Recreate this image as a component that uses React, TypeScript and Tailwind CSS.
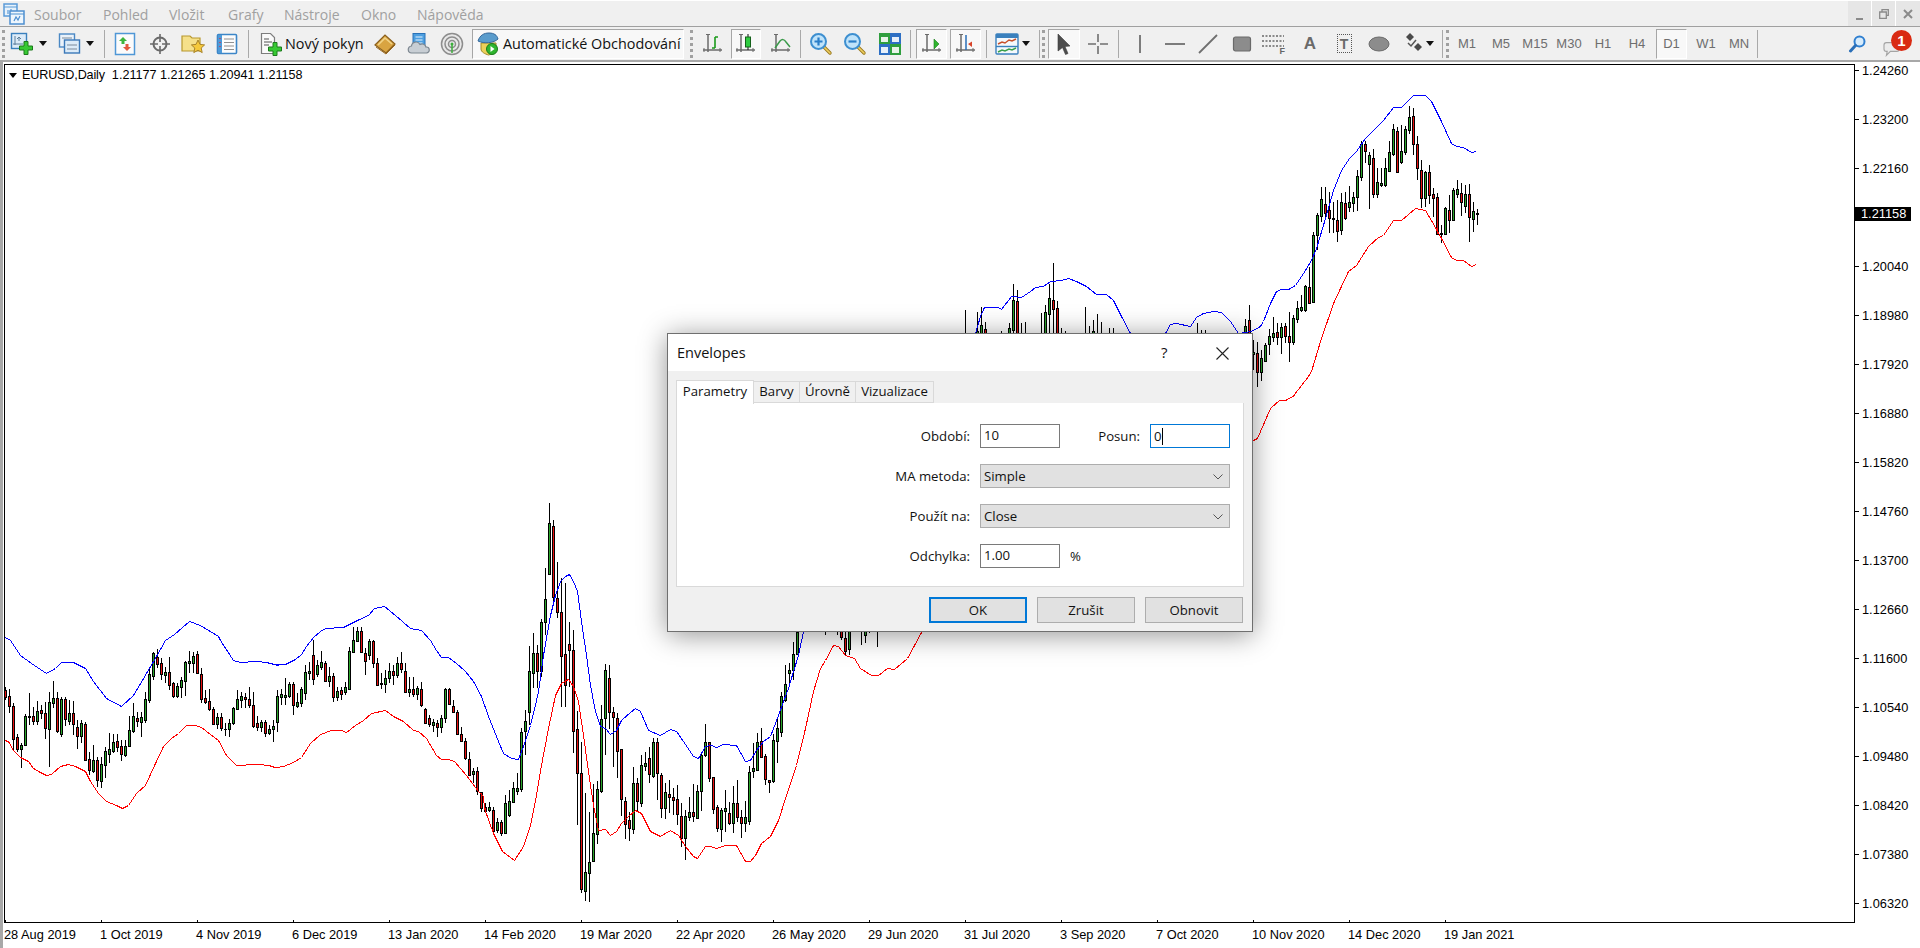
import React from "react";

type Bar = number[];
const bars: { i: number; y: number[]; c: number }[] = [];
const seg = (start: number, base: number, rows: Bar[]) => {
  rows.forEach((r, k) => {
    bars.push({ i: start + k, y: [r[0], r[1], r[2], r[3]].map((v) => Math.round(base + v / 3)), c: r[4] });
  });
};
// wickTop, bodyTop, bodyBottom, wickBottom, colour (1 green, 0 red)
seg(0, 640, [
  [142,150,172,180,0],[148,168,198,220,0],[190,198,296,330,0],[283,292,326,335,0],[308,316,326,383,1],[222,228,314,318,1],[160,228,231,254,1],[200,228,242,255,0],[183,213,242,256,1],[195,210,218,238,0],
  [185,219,264,298,0],[155,186,266,380,1],[124,174,188,205,1],[155,174,272,280,0],[170,176,282,292,1],[172,176,238,258,0],[180,218,242,254,1],[182,219,251,285,0],[240,261,288,327,0],[240,249,288,308,1],
  [245,252,360,360,0],[335,357,390,405,0],[315,360,392,400,1],[350,360,420,440,0],[350,372,422,445,1],[322,333,374,413,1],[280,327,342,370,1],[282,306,333,340,1],[282,303,321,335,0],[300,319,342,362,0],
  [300,319,345,350,1],[228,270,318,320,1],[190,229,272,278,1],[215,234,242,260,0],[215,231,245,290,1],[155,177,240,248,1],[85,102,180,190,1],[35,39,107,120,1],[28,50,72,85,0],[55,69,103,120,0],
  [80,96,104,130,1],[52,96,134,150,0],[125,129,168,175,0],[130,138,168,175,1],[110,121,141,175,1],[62,66,122,168,1],[32,63,68,100,1],[35,48,68,100,1],[34,42,100,100,0],[85,102,177,190,0],
  [150,174,186,192,0],[148,183,208,212,0],[200,207,252,255,0],[220,231,252,268,1],[218,231,265,274,0],[250,267,268,288,0],[238,249,268,292,1],[200,203,250,255,1],[150,178,208,210,1],[155,169,179,205,1],
  [160,171,178,205,0],[142,177,196,205,0],[155,195,257,265,0],[228,249,262,272,0],[240,245,260,275,1],[240,246,280,290,0],[255,267,279,285,1],
]);
seg(67, 630, [
  [270,288,296,335,1],[180,198,275,305,1],[178,192,200,225,1],[144,195,200,225,1],[155,162,198,205,1],[155,162,224,255,0],[190,216,228,235,1],[172,178,220,230,1],[105,126,190,210,1],[95,124,128,150,1],
  [30,76,146,165,0],[90,105,131,140,1],[62,97,110,120,1],[92,99,152,155,0],[110,139,152,170,1],[130,139,202,215,0],[170,184,200,212,1],[170,181,191,210,0],[155,172,185,195,1],[50,64,176,178,1],
  [-10,30,65,70,1],[-10,3,32,36,1],[-10,3,67,70,0],[55,70,92,135,0],[28,34,76,90,1],[30,33,98,115,0],[85,99,164,165,0],[130,159,161,178,1],[120,145,163,190,1],[100,122,143,160,1],
  [105,124,134,165,0],[80,100,134,145,1],[66,100,118,130,0],[100,122,185,190,0],[140,178,185,200,1],[142,178,193,200,0],[168,175,193,210,1],[155,178,226,230,0],[235,236,278,280,0],[256,265,282,290,0],
  [268,277,284,305,1],[270,278,291,320,0],[255,265,290,310,1],[175,176,264,280,1],[175,178,222,225,0],[210,229,247,250,0],[240,247,311,315,0],[290,311,334,335,0],[325,334,385,390,0],[365,388,434,437,0],
  [415,424,433,460,1],[410,424,484,495,0],[485,485,533,545,0],
]);
seg(120, 480, [
  [968,980,992,995,0],[965,980,990,995,1],[982,990,1052,1060,0],[1015,1025,1050,1060,1],[1020,1026,1060,1068,0],[945,970,1060,1062,1],[930,962,1005,1010,1],[905,925,965,968,1],[880,925,932,945,1],[745,755,928,935,1],[690,723,753,825,1],[498,573,696,735,1],
]);
seg(132, 495, [
  [415,475,535,580,1],[450,475,527,580,0],[372,382,527,545,1],[220,313,382,420,1],[25,85,237,240,1],[75,93,307,330,0],[202,310,350,368,0],[248,352,482,636,0],[265,478,571,637,0],[380,448,466,575,0],
  [405,466,707,775,0],[648,703,835,990,0],[740,835,1183,1195,0],[895,1132,1187,1217,1],[950,1100,1135,1220,1],[868,1015,1097,1100,1],[858,883,1016,1047,1],[630,673,888,895,1],[507,526,668,780,1],[510,550,650,702,0],
  [637,652,665,815,0],[655,670,767,850,0],[763,763,913,962,0],[905,918,988,1032,0],[950,975,1000,1037,0],[815,865,1003,1016,1],[850,865,917,950,0],[780,811,923,935,1],[770,805,812,828,1],[757,790,838,865,0],
  [730,740,842,850,1],[730,742,835,915,0],[835,840,938,968,0],[865,892,940,972,1],[855,898,905,955,0],[880,907,914,960,0],[870,913,958,990,0],[925,964,1028,1055,0],[945,962,1030,1095,1],[905,950,965,978,1],
  [868,952,964,980,0],[870,888,968,968,1],[775,780,887,948,1],[688,742,780,785,1],[742,742,848,860,0],[845,847,941,957,0],[930,935,998,1012,0],[940,945,1003,1040,1],[885,940,948,1010,1],[920,955,984,990,0],
  [872,925,985,1015,1],[855,925,965,980,0],[945,967,985,1028,0],[918,967,985,1012,1],[813,832,979,990,1],[745,820,827,850,1],[715,742,824,828,1],[700,738,785,790,0],[778,784,853,870,0],[855,855,860,893,0],
  [718,736,857,865,1],[668,700,738,805,1],[590,604,710,725,1],[510,568,614,622,1],[505,526,535,567,1],[440,478,524,555,1],[385,410,478,480,1],
]);
const hiddenBelow: number[][] = [
  [205,-100,-100,-100,45,1],[208,-100,-100,-100,45,1],[209,-100,-100,52,60,0],[210,-100,55,92,105,0],[211,-100,-100,87,105,1],[214,-100,-100,-100,75,1],[215,-100,-100,45,70,1],[216,-100,-100,-100,38,1],[218,-100,-100,-100,80,1],
];
hiddenBelow.forEach((h) => seg(h[0], 620, [h.slice(1)]));
const hiddenAbove: number[][] = [
  [240,210,400,400,400,1],[243,215,272,400,400,1],[244,200,255,400,400,1],[245,245,268,400,400,0],[249,272,400,400,400,1],[251,250,265,400,400,1],[252,132,180,270,400,1],[253,150,183,400,400,0],[254,250,278,400,400,1],[255,245,400,400,400,1],
  [259,220,400,400,400,1],[260,195,216,400,400,1],[261,132,175,223,400,1],[262,70,181,208,400,0],[263,183,205,400,400,0],[264,265,400,400,400,1],[265,272,400,400,400,1],[270,200,400,400,400,1],[271,258,400,400,400,1],[272,240,273,400,400,1],
  [273,222,400,400,400,1],[274,245,400,400,400,1],[276,265,400,400,400,1],[277,265,400,400,400,1],[298,248,400,400,400,1],[299,270,400,400,400,1],[300,270,400,400,400,1],[310,237,258,400,400,1],[311,195,240,400,400,0],
];
hiddenAbove.forEach((h) => seg(h[0], 240, [h.slice(1)]));
seg(312, 95, [
  [735,772,778,825,1],[740,775,830,875,0],[765,790,832,857,1],[745,750,797,800,1],[702,724,746,780,1],[667,714,725,740,1],[685,710,727,750,0],[685,696,725,777,1],[685,694,722,745,0],[652,724,742,800,0],
  [660,669,742,750,1],[618,640,672,685,1],[600,637,644,650,1],[570,573,644,650,1],[515,577,623,627,0],[412,420,622,622,1],[355,360,420,465,1],[275,313,362,380,1],[275,327,354,370,0],[290,345,368,413,0],
  [320,369,373,415,1],[315,376,407,440,0],[295,322,406,420,1],[292,324,368,375,0],[272,322,335,350,1],[292,307,323,352,1],[225,243,307,348,1],[138,148,245,258,1],[138,147,167,205,0],[170,180,208,342,1],
  [162,190,296,310,0],[220,262,296,310,1],[220,265,271,275,1],[190,219,270,275,1],[138,172,228,232,1],[88,103,178,182,1],[95,108,230,232,0],[90,169,200,208,1],[92,103,172,180,1],[33,66,106,118,1],
  [40,64,147,180,0],[124,148,220,255,0],[195,225,310,340,0],[228,232,310,335,1],[210,232,301,327,0],[280,298,308,365,0],[295,307,416,418,0],[390,414,416,445,0],[335,340,418,420,1],[300,346,374,415,0],
  [280,286,374,375,1],[255,283,296,310,1],[265,295,322,362,0],[270,297,332,355,1],[268,298,365,440,0],[322,348,371,410,1],[342,355,358,390,1],
]);

let blackPath = "";
let greenPath = "";
let redPath = "";
bars.forEach((b) => {
  const x = 5 + 4 * b.i;
  const [wt, bt, bb, wb] = b.y;
  blackPath += `M${x} ${wt}h1V${Math.max(wb, wt + 1)}h-1z`;
  blackPath += `M${x - 1} ${bt}h3V${Math.max(bb + 1, bt + 1)}h-3z`;
  if (bb - bt >= 2) {
    const f = `M${x} ${bt + 1}h1V${bb}h-1z`;
    if (b.c) greenPath += f;
    else redPath += f;
  }
});

type Pt = number[];
const P = (x0: number, sx: number, b: number, pts: Pt[]) =>
  pts.map(([x, y]) => `${Math.floor(x0 + x / sx) + 0.5},${Math.floor(b + y / 3) + 0.5}`).join(" ");

const blueLine = [
  P(0, 3, 640, [[15, -9],[30, 0],[60, 45],[95, 70],[138, 100],[165, 85],[185, 67],[220, 67],[255, 85],[280, 125],[320, 175],[365, 200],[400, 165],[440, 100],[470, 50],[495, 0]]),
  P(0, 2.24, 480, [[390, 463],[425, 424],[450, 435],[490, 470]]),
  P(0, 3, 640, [[660, 0],[700, 60],[720, 67],[770, 65],[800, 67],[835, 75]]),
  P(270, 3, 630, [[20, 104],[45, 102],[75, 88],[95, 72],[110, 50],[130, 22],[150, 5]]),
  P(0, 2.24, 480, [[730, 445],[770, 443],[800, 420],[825, 405],[840, 385],[862, 380],[885, 405],[920, 445]]),
  P(270, 3, 630, [[455, 0],[480, 30],[500, 60],[515, 82],[535, 82],[560, 100],[585, 125],[610, 155],[635, 200],[655, 260],[680, 320],[700, 370],[725, 385],[745, 388],[760, 350]]),
  P(530, 3, 495, [[0, 690],[15, 630],[25, 590],[40, 480],[60, 360],[75, 300],[90, 260],[105, 245],[118, 238],[130, 260],[142, 290],[155, 380],[170, 480],[180, 570],[195, 650],[210, 695],[225, 700],[240, 718],[260, 705],[275, 675],[300, 652],[315, 640],[330, 650],[355, 705],[390, 722],[420, 703],[440, 710],[460, 740],[490, 785],[505, 790],[525, 755],[545, 750],[560, 757],[580, 748],[620, 750],[645, 800],[660, 795],[680, 765],[700, 740],[720, 725],[745, 660],[760, 620],[775, 580],[790, 530],[805, 480],[820, 410]]),
  P(930, 3, 240, [[135, 280],[150, 230],[163, 202],[205, 202],[215, 208],[245, 170],[275, 172],[300, 155],[315, 142],[340, 138],[360, 125],[395, 122],[415, 115],[440, 125],[470, 140],[500, 162],[530, 163],[550, 180],[575, 230],[600, 280],[705, 280],[720, 253],[740, 250],[780, 258],[800, 232],[820, 220],[850, 213],[875, 218],[900, 245],[925, 280],[965, 275],[990, 260]]),
  P(1250, 3, 95, [[40, 680],[60, 625],[80, 588],[95, 582],[115, 584],[135, 570],[160, 535],[185, 495],[200, 460],[225, 370],[250, 285],[275, 225],[298, 190],[320, 170],[345, 130],[375, 100],[400, 75],[430, 36],[455, 36],[490, 2],[500, 0],[525, 2],[545, 20],[575, 80],[605, 145],[620, 155],[640, 157],[665, 172],[680, 170]]),
].join(" ");

const redLine = [
  P(0, 3, 640, [[14, 300],[25, 305],[40, 330],[60, 352],[85, 365],[100, 385],[120, 397],[140, 407],[155, 402],[180, 378],[205, 373],[225, 378],[255, 395],[270, 425],[295, 460],[320, 485],[350, 495],[368, 505],[385, 495],[410, 460],[435, 435],[465, 370],[490, 320],[515, 295],[535, 280],[560, 257],[585, 257],[605, 262],[630, 282],[655, 300],[680, 345],[710, 375],[770, 373],[810, 375]]),
  P(270, 3, 630, [[0, 408],[20, 412],[40, 410],[70, 397],[95, 382],[120, 340],[150, 312],[185, 302],[215, 300],[230, 306],[255, 285],[280, 272],[305, 250],[345, 240],[370, 258],[400, 275],[430, 302],[445, 303],[470, 325],[500, 375],[515, 388],[535, 388],[552, 395],[590, 435],[625, 485],[640, 500]]),
  P(0, 2.24, 480, [[1085, 985],[1105, 1060],[1125, 1115],[1152, 1140],[1172, 1100]]),
  P(530, 3, 495, [[0, 990],[20, 900],[35, 810],[55, 700],[75, 600],[95, 565],[115, 552],[130, 575],[145, 620],[160, 720],[175, 830],[190, 930],[205, 1005],[225, 1003],[240, 1020],[260, 1010],[275, 985],[295, 965],[315, 945],[335, 955],[360, 1010],[390, 1025],[420, 1005],[445, 1020],[465, 1055],[490, 1085],[502, 1090],[525, 1055],[540, 1053],[560, 1060],[585, 1050],[620, 1052],[645, 1098],[660, 1100],[675, 1080],[695, 1045],[720, 1025],[745, 975],[770, 900],[800, 810],[825, 700],[850, 590],[870, 520]]),
  P(700, 2.24, 620, [[280, 120],[300, 75],[310, 78],[325, 105],[345, 115],[360, 145],[385, 165],[400, 165],[420, 146],[435, 148],[465, 115],[480, 75],[497, 38]]),
  P(1240, 2.306, 60, [[30, 1140],[40, 1135],[70, 1045],[90, 1020],[105, 1020],[125, 1005]]),
  P(1250, 3, 95, [[133, 897],[175, 845],[185, 830],[210, 740],[250, 625],[295, 530],[320, 510],[355, 455],[385, 428],[400, 420],[430, 377],[455, 377],[495, 340],[525, 345],[545, 375],[575, 430],[605, 487],[620, 495],[640, 495],[665, 515],[680, 508]]),
].join(" ");

const prices = ["1.24260","1.23200","1.22160","","1.20040","1.18980","1.17920","1.16880","1.15820","1.14760","1.13700","1.12660","1.11600","1.10540","1.09480","1.08420","1.07380","1.06320"];
const dates = ["28 Aug 2019","1 Oct 2019","4 Nov 2019","6 Dec 2019","13 Jan 2020","14 Feb 2020","19 Mar 2020","22 Apr 2020","26 May 2020","29 Jun 2020","31 Jul 2020","3 Sep 2020","7 Oct 2020","10 Nov 2020","14 Dec 2020","19 Jan 2021"];
const menus = [
  { t: "Soubor", c: "w-[69px]" },
  { t: "Pohled", c: "w-[66px]" },
  { t: "Vložit", c: "w-[59px]" },
  { t: "Grafy", c: "w-[56px]" },
  { t: "Nástroje", c: "w-[77px]" },
  { t: "Okno", c: "w-[56px]" },
  { t: "Nápověda", c: "w-[80px]" },
];

const Svg = ({ children, w = 24, h = 24 }: { children: React.ReactNode; w?: number; h?: number }) => (
  <svg width={w} height={h} viewBox={`0 0 ${w} ${h}`} fill="none">{children}</svg>
);
const Cell = ({ c = "", children }: { c?: string; children: React.ReactNode }) => (
  <div className={`w-6 h-6 shrink-0 flex items-center justify-center ${c}`}>{children}</div>
);
const Sep = ({ c = "" }: { c?: string }) => <div className={`w-px h-[28px] shrink-0 bg-[#a9a9a9] ${c}`} />;
const Grip = ({ c = "" }: { c?: string }) => <div className={`w-[3px] h-[28px] shrink-0 border-l-[3px] border-dotted border-[#a0a0a0] ${c}`} />;
const Caret = ({ c = "" }: { c?: string }) => (
  <div className={`w-2 h-6 shrink-0 flex items-center justify-center ${c}`}>
    <svg width="8" height="5" viewBox="0 0 8 5"><path d="M0 0h8L4 5z" fill="#111" /></svg>
  </div>
);
const Toggle = ({ c = "", children }: { c?: string; children: React.ReactNode }) => (
  <div className={`h-[30px] shrink-0 flex items-center justify-center bg-[#f8f8f8] border border-t-[#a6a6a6] border-l-[#a6a6a6] border-r-white border-b-white ${c}`}>{children}</div>
);
const Axes = () => (
  <>
    <path d="M7 3v17M2 18h19" stroke="#6b6b6b" strokeWidth="1.500" />
    <path d="M5 2.500h4M3 16v4M19 16v4" stroke="#6b6b6b" strokeWidth="1" />
  </>
);
const TF = ({ t, c = "w-[34px]" }: { t: string; c?: string }) => (
  <div className={`h-6 shrink-0 flex items-center justify-center text-[13px] text-[#6e6e6e] ${c}`}>{t}</div>
);

const PlusMark = ({ x = 0, y = 0 }: { x?: number; y?: number }) => (
  <path transform={`translate(${x} ${y})`} d="M4.500 0h4v4.500H13v4H8.500V13h-4V8.500H0v-4h4.500z" fill="#36c933" stroke="#1c7a1c" strokeWidth="1" />
);

const Magnifier = ({ minus }: { minus?: boolean }) => (
  <Svg>
    <path d="M15 15l6 6" stroke="#9a7a22" strokeWidth="3.400" strokeLinecap="round" />
    <path d="M15 15l6 6" stroke="#f0d060" strokeWidth="1.600" strokeLinecap="round" />
    <circle cx="9.500" cy="9.500" r="7.500" fill="#bfe3fa" stroke="#3d8fd0" strokeWidth="2" />
    <path d={minus ? "M5.500 9.500h8" : "M5.500 9.500h8M9.500 5.500v8"} stroke="#2a7ec8" strokeWidth="2.200" />
  </Svg>
);

export default function App() {
  return (
    <div className="relative flex flex-col w-[1920px] h-[948px] overflow-hidden bg-[#f0f0f0] font-['Liberation_Sans',Arial,sans-serif]">
      {/* menu bar */}
      <div className="h-[27px] shrink-0 flex items-center border-b border-[#a0a0a0] bg-[#f0f0f0] border-t border-t-white">
        <div className="w-[34px] shrink-0 flex justify-center pr-[6px]">
          <Svg w={22} h={22}>
            <rect x="1" y="1" width="13" height="12" fill="#e8f2fb" stroke="#5b9bd8" strokeWidth="1.500" />
            <path d="M1 4h13M5 7v4M8 6v5" stroke="#5b9bd8" strokeWidth="1.200" />
            <rect x="7" y="8" width="14" height="13" fill="#eef6fd" stroke="#4d8fd0" strokeWidth="1.500" />
            <path d="M7 11h14M11 18l2-4 2 3 2-4" stroke="#4d8fd0" strokeWidth="1.200" />
          </Svg>
        </div>
        {menus.map((m) => (
          <div key={m.t} className={`shrink-0 relative top-px font-['Open_Sans',sans-serif] text-[14px] text-[#a0a0a0] ${m.c}`}>{m.t}</div>
        ))}
        <div className="flex-1" />
        <div className="flex self-start h-[25px] gap-px bg-white">
          <div className="w-[23px] h-full bg-[#e6e6e6] flex items-end justify-center pb-[6px]"><div className="w-[7px] h-[2px] bg-[#8a8a8a]" /></div>
          <div className="w-[23px] h-full bg-[#e6e6e6] flex items-center justify-center">
            <svg width="10" height="10" viewBox="0 0 10 10" fill="none"><path d="M3 2.500V.700h6.300v5.600H7.500M.700 3h6.600v6.300H.700z" stroke="#8a8a8a" strokeWidth="1.300" /></svg>
          </div>
          <div className="w-[24px] h-full bg-[#e6e6e6] flex items-center justify-center">
            <svg width="10" height="10" viewBox="0 0 10 10" fill="none"><path d="M1 1l8 8M9 1l-8 8" stroke="#8a8a8a" strokeWidth="2" /></svg>
          </div>
        </div>
      </div>

      {/* toolbar */}
      <div className="relative h-[35px] shrink-0 flex items-center bg-[#f0f0f0] border-b-2 border-[#a8a8a8]">
        <Grip c="ml-[2px]" />
        <Cell c="ml-[5px]">
          <Svg>
            <rect x="1.500" y="1.500" width="15" height="15" fill="#dcebf8" stroke="#3a80bd" strokeWidth="1.400" />
            <path d="M5 4v9M3 12h10M9 5v4M7 7l2-2 2 2" stroke="#5c7f9a" strokeWidth="1" />
            <PlusMark x={9.5} y={9.5} />
          </Svg>
        </Cell>
        <Caret c="ml-[5px]" />
        <Cell c="ml-[11px]">
          <Svg>
            <rect x="1.500" y="2" width="15" height="13" fill="#eaf2fa" stroke="#4a88c4" strokeWidth="1.400" />
            <rect x="6.500" y="8" width="15" height="13" fill="#dcebf8" stroke="#3a78b8" strokeWidth="1.400" />
            <path d="M4 6h10M9 13h10M9 17h10" stroke="#7a8a9a" strokeWidth="1.200" />
          </Svg>
        </Cell>
        <Caret c="ml-[4px]" />
        <Sep c="ml-[10px]" />
        <Cell c="ml-[8px]">
          <Svg>
            <rect x="2.500" y="1.500" width="19" height="21" fill="#fbfbfb" stroke="#4f97d6" strokeWidth="1.500" />
            <path d="M10 5l4 4h-2.500v3h-3V9H6z" fill="#3db53d" />
            <path d="M14 19l-4-4h2.500v-3h3v3H18z" fill="#e2583c" />
          </Svg>
        </Cell>
        <Cell c="ml-[11px]">
          <Svg>
            <circle cx="12" cy="12" r="6.500" stroke="#6a6a6a" strokeWidth="2" />
            <path d="M12 2v8M12 14v8M2 12h8M14 12h8" stroke="#6a6a6a" strokeWidth="1.600" />
          </Svg>
        </Cell>
        <Cell c="ml-[9px]">
          <Svg>
            <path d="M1 4h8l2 2h8v13H1z" fill="#f5e08a" stroke="#b8982e" strokeWidth="1.200" />
            <path d="M17 8l2 4.400 4.600.5-3.400 3.100 1 4.600-4.200-2.400-4.200 2.400 1-4.600-3.400-3.100 4.600-.5z" fill="#f5c93c" stroke="#a8832a" strokeWidth="1" />
          </Svg>
        </Cell>
        <Cell c="ml-[10px]">
          <Svg>
            <rect x="2.500" y="2.500" width="19" height="19" rx="1" fill="#fcfcfc" stroke="#3c86c8" strokeWidth="1.600" />
            <rect x="3" y="3" width="4" height="18" fill="#4d9ad8" />
            <path d="M9 7h10M9 10.500h10M9 14h10M9 17.500h10" stroke="#909090" strokeWidth="1.200" />
            <path d="M5 6v1M5 10v1M5 14v1" stroke="#e23" strokeWidth="1.200" />
          </Svg>
        </Cell>
        <Sep c="ml-[9px]" />
        <Cell c="ml-[9px]">
          <Svg>
            <path d="M3.500 1.500h9l4 4v16h-13z" fill="#fafafa" stroke="#7d7d7d" strokeWidth="1.200" />
            <path d="M6 7h5M6 10h8M6 13h5" stroke="#8a8a8a" strokeWidth="1.300" />
            <PlusMark x={10.5} y={10.5} />
          </Svg>
        </Cell>
        <div className="ml-[3px] w-[77px] shrink-0 text-[14.400px] leading-6 whitespace-nowrap text-[#111] font-['Open_Sans',sans-serif]">Nový pokyn</div>
        <Cell c="ml-[11px]">
          <Svg>
            <path d="M2 13L12 3l10 9-9 9z" fill="#d9a441" stroke="#8a5f1c" strokeWidth="1.200" />
            <path d="M5 13l7-7 7 6" stroke="#f2d488" strokeWidth="1.600" />
            <path d="M3 15l10 7 9-9" stroke="#9a6a22" strokeWidth="1" />
          </Svg>
        </Cell>
        <Cell c="ml-[10px]">
          <Svg>
            <rect x="6" y="1.500" width="12" height="13" fill="#4d9fe0" stroke="#2a72b8" />
            <path d="M8.500 5h7M8.500 8h7M8.500 11h7" stroke="#e8f4fd" strokeWidth="1.200" />
            <path d="M5 21a3.500 3.500 0 0 1-.5-7 4.500 4.500 0 0 1 8.500-1.500A4 4 0 0 1 19 15a3 3 0 0 1 .5 6z" fill="#c8ced4" stroke="#7d8790" strokeWidth="1.200" />
          </Svg>
        </Cell>
        <Cell c="ml-[9px]">
          <Svg>
            <circle cx="12" cy="12" r="10.500" fill="#e8e8e8" stroke="#8d8d8d" strokeWidth="1.500" />
            <circle cx="12" cy="12" r="7" stroke="#8d8d8d" strokeWidth="1.500" />
            <circle cx="12" cy="12" r="3.500" stroke="#8d8d8d" strokeWidth="1.500" />
            <circle cx="12" cy="12" r="1.500" fill="#3cae3c" />
            <path d="M12 12v9" stroke="#3cae3c" strokeWidth="1.500" />
          </Svg>
        </Cell>
        <div className="ml-[8px] w-[212px] h-[30px] shrink-0 flex items-center bg-[#f8f8f8] border border-t-[#a6a6a6] border-l-[#a6a6a6] border-r-white border-b-white">
          <div className="ml-[3px] w-6 h-6 flex items-center justify-center">
            <Svg>
              <path d="M5 11h15v6c0 3-4 5-7.500 6C9 22 5 20 5 17z" fill="#ecd05a" stroke="#a08a2a" />
              <path d="M2 9c2-6 6-8 11-8s8 2 9 6c-4 4-14 5-20 2z" fill="#5a9ccc" stroke="#35689a" />
              <circle cx="16" cy="17" r="5.500" fill="#2fb52f" stroke="#1a7a1a" />
              <path d="M14.500 14l4 3-4 3z" fill="#fff" />
            </Svg>
          </div>
          <div className="ml-[3px] text-[14.400px] whitespace-nowrap text-[#111] font-['Open_Sans',sans-serif]">Automatické Obchodování</div>
        </div>
        <Grip c="ml-[6px]" />
        <Cell c="ml-[8px]">
          <Svg><Axes /><path d="M14 5v11" stroke="#1a9a1a" strokeWidth="1.600" /><path d="M14 5h3M11 16h3" stroke="#1a9a1a" strokeWidth="1.600" /></Svg>
        </Cell>
        <Toggle c="ml-[6px] w-[30px]">
          <Svg><Axes /><path d="M14 2v16" stroke="#111" strokeWidth="1" /><rect x="11.500" y="5" width="5" height="10" fill="#2ecc40" stroke="#14601a" /></Svg>
        </Toggle>
        <Cell c="ml-[8px]">
          <Svg><Axes /><path d="M6 16l5-7c2-2 4-2 6 1l4 5" stroke="#3a9a4a" strokeWidth="1.500" /></Svg>
        </Cell>
        <Sep c="ml-[7px]" />
        <Cell c="ml-[8px]"><Magnifier /></Cell>
        <Cell c="ml-[10px]"><Magnifier minus /></Cell>
        <Cell c="ml-[11px]">
          <Svg>
            <rect x="1" y="1" width="22" height="22" fill="#2d6fc4" />
            <rect x="1" y="1" width="11" height="11" fill="#2f9e3e" />
            <rect x="12" y="12" width="11" height="11" fill="#2f9e3e" />
            <rect x="3" y="5" width="7" height="5" fill="#e8f4e8" />
            <rect x="14" y="5" width="7" height="5" fill="#e6effa" />
            <rect x="3" y="15" width="7" height="6" fill="#e6effa" />
            <rect x="14" y="15" width="7" height="6" fill="#e8f4e8" />
          </Svg>
        </Cell>
        <Sep c="ml-[8px]" />
        <Toggle c="ml-[5px] w-[31px]">
          <Svg><Axes /><path d="M14 7l5 5-5 5z" fill="#2fb52f" stroke="#1a7a1a" strokeWidth=".600" /></Svg>
        </Toggle>
        <Toggle c="ml-[3px] w-[31px]">
          <Svg><Axes /><path d="M12 3v15" stroke="#2a6fb8" strokeWidth="1.500" /><path d="M22 12h-4v-2.500L14 12l4 3v-3z" fill="#d8442a" /></Svg>
        </Toggle>
        <Sep c="ml-[5px]" />
        <Cell c="ml-[8px]">
          <Svg>
            <rect x="1" y="2" width="22" height="20" rx="1" fill="#f4f8fc" stroke="#3a80bd" strokeWidth="1.400" />
            <rect x="1" y="2" width="22" height="4" fill="#3a80bd" />
            <path d="M1 14.500h22" stroke="#3a80bd" strokeWidth="1.400" />
            <path d="M3 12l4-2 3 1 4-3 3 1 4-2" stroke="#c8502a" strokeWidth="1.400" />
            <path d="M3 20l4-2 3 1 4-2 3 1 4-2" stroke="#3aa04a" strokeWidth="1.400" />
          </Svg>
        </Cell>
        <Caret c="ml-[3px]" />
        <Sep c="ml-[9px]" />
        <Grip c="ml-[2px]" />
        <Toggle c="ml-[3px] w-[32px]">
          <Svg><path d="M6 2l12 12-5 .5 3 7-2.500 1-3-7L6 19z" fill="#4d4d4d" stroke="#3a3a3a" strokeWidth=".600" /></Svg>
        </Toggle>
        <Cell c="ml-[6px]">
          <Svg><path d="M12 2v8M12 14v8M2 12h8M14 12h8" stroke="#6f6f6f" strokeWidth="1.600" /></Svg>
        </Cell>
        <Sep c="ml-[8px]" />
        <Cell c="ml-[9px]"><Svg><path d="M12 3v18" stroke="#6f6f6f" strokeWidth="1.800" /></Svg></Cell>
        <Cell c="ml-[11px]"><Svg><path d="M2 12h20" stroke="#6f6f6f" strokeWidth="1.800" /></Svg></Cell>
        <Cell c="ml-[9px]"><Svg><path d="M3 21L21 3" stroke="#6f6f6f" strokeWidth="1.800" /></Svg></Cell>
        <Cell c="ml-[10px]"><Svg><rect x="3.500" y="5" width="17" height="14" rx="2" fill="#8c8c8c" stroke="#6a6a6a" strokeWidth="1.200" /></Svg></Cell>
        <Cell c="ml-[7px]">
          <div className="relative w-6 h-6">
            <svg width="24" height="24" viewBox="0 0 24 24" fill="none"><path d="M1 4h22M1 9h22M1 14h22" stroke="#8a8a8a" strokeWidth="2" strokeDasharray="2 1.500" /></svg>
            <span className="absolute right-0 bottom-[-3px] text-[9px] font-bold text-[#666]">F</span>
          </div>
        </Cell>
        <Cell c="ml-[13px]"><span className="text-[17px] font-bold text-[#6a6a6a]">A</span></Cell>
        <Cell c="ml-[10px]">
          <div className="w-[15px] h-[19px] flex items-center justify-center border border-dotted border-[#555] text-[14px] font-bold leading-none text-[#6a6a6a]">T</div>
        </Cell>
        <Cell c="ml-[11px]"><Svg><ellipse cx="12" cy="12" rx="10" ry="7" fill="#8c8c8c" stroke="#6a6a6a" /></Svg></Cell>
        <Cell c="ml-[10px]">
          <Svg>
            <path d="M9 1l4 4-4 4-4-4z" fill="#4a4a4a" />
            <path d="M7 11l3 3 5-6" stroke="#555" strokeWidth="1.500" />
            <path d="M17 11l4 4-4 4-4-4z" fill="#4a4a4a" />
          </Svg>
        </Cell>
        <Caret c="ml-[1px]" />
        <Sep c="ml-[8px]" />
        <Grip c="ml-[3px]" />
        <TF t="M1" c="ml-[1px] w-[34px]" />
        <TF t="M5" />
        <TF t="M15" />
        <TF t="M30" />
        <TF t="H1" />
        <TF t="H4" />
        <Toggle c="ml-[2px] w-[31px] text-[13px] text-[#6e6e6e]">D1</Toggle>
        <TF t="W1" c="ml-[2px] w-[34px]" />
        <TF t="MN" c="w-[32px]" />
        <Sep c="ml-[2px]" />
        <div className="flex-1" />
        <Cell c="mr-[9px]">
          <Svg w={18} h={18}>
            <circle cx="11.500" cy="6.500" r="5" fill="#d8ecfb" stroke="#2f7fd0" strokeWidth="2" />
            <path d="M7.500 10.500L2.500 16" stroke="#2a6fb8" strokeWidth="3" strokeLinecap="round" />
          </Svg>
        </Cell>
        <div className="relative w-[34px] h-6 shrink-0 mr-[8px]">
          <svg className="absolute left-[5px] top-[9px]" width="18" height="16" viewBox="0 0 22 20" fill="none">
            <path d="M4 2h13a3 3 0 0 1 3 3v5a3 3 0 0 1-3 3H9l-5 5 1-5H4a3 3 0 0 1-3-3V5a3 3 0 0 1 3-3z" fill="#ececec" stroke="#a4a4a4" strokeWidth="1.400" />
          </svg>
          <div className="absolute right-0 top-[-2px] w-[21px] h-[21px] rounded-full bg-[#d92a12] flex items-center justify-center text-white text-[15px] font-bold leading-none">1</div>
        </div>
      </div>

      {/* chart + axes */}
      <div className="relative flex-1 min-h-0 bg-white border-l-[3px] border-[#a8a8a8] pt-[2px]">
        <div className="flex h-[859px]">
          <div className="relative ml-px w-[1851px] h-[859px] shrink-0 border border-black">
            <svg className="block" width="1849" height="857" viewBox="5 65 1849 857" shapeRendering="crispEdges">
              <path d={blackPath} fill="#000" />
              <path d={greenPath} fill="#2aa52a" />
              <path d={redPath} fill="#e81010" />
              <polyline points={blueLine} fill="none" stroke="#0000ff" strokeWidth="1" />
              <polyline points={redLine} fill="none" stroke="#ff0000" strokeWidth="1" />
            </svg>
            <div className="absolute left-[4px] top-0 flex items-center h-5 text-[12.600px] text-black whitespace-pre">
              <svg className="mr-[5px]" width="8" height="5" viewBox="0 0 8 5"><path d="M0 0h8L4 5z" fill="#000" /></svg>
              <span className="tracking-[-0.150px]">EURUSD,Daily</span>
              <span>  1.21177 1.21265 1.20941 1.21158</span>
            </div>
          </div>
          <div className="relative flex flex-col flex-1">
            {prices.map((p, k) => (
              <div key={k} className="h-[49px] shrink-0 flex items-center relative top-[-18px] text-[12.800px] text-black">
                <div className="w-[4px] h-px bg-black mr-[3px]" />
                {p}
              </div>
            ))}
            <div className="absolute left-0 top-[143px] w-[56px] h-[14px] bg-black text-white text-[12.800px] leading-[14px] pl-[6px]">1.21158</div>
          </div>
        </div>
        <div className="flex pl-[1px] relative">
          {dates.map((d) => (
            <div key={d} className="relative w-[96px] shrink-0 h-[23px] text-[12.800px] text-black whitespace-nowrap pt-[2px]">
              <div className="absolute left-[1px] top-[-3px] w-px h-[3px] bg-black" />
              {d}
            </div>
          ))}
        </div>
      </div>

      {/* dialog */}
      <div className="absolute left-[667px] top-[333px] w-[586px] h-[299px] flex flex-col bg-[#f0f0f0] border border-[#6f6f6f] shadow-[0_3px_26px_rgba(0,0,0,0.42)] font-['Open_Sans',sans-serif] text-[13.200px] text-[#111]">
        <div className="relative h-[37px] shrink-0 flex items-center bg-white pl-[9px]">
          <span className="text-[14.500px]">Envelopes</span>
          <span className="absolute left-[493px] top-[7px] text-[15px]">?</span>
          <svg className="absolute left-[548px] top-[13px]" width="13" height="13" viewBox="0 0 13 13" fill="none"><path d="M.5.500l12 12M12.500.500l-12 12" stroke="#222" strokeWidth="1.100" /></svg>
        </div>
        <div className="flex items-end h-[32px] shrink-0 pl-[8px] relative">
          <div className="relative z-10 w-[78px] h-[24px] -mb-px pb-[2px] bg-white border border-b-0 border-[#d9d9d9] flex items-center justify-center">Parametry</div>
          <div className="w-[46px] h-[22px] bg-[#f0f0f0] border-y border-r border-[#d9d9d9] flex items-center justify-center">Barvy</div>
          <div className="w-[56px] h-[22px] bg-[#f0f0f0] border-y border-r border-[#d9d9d9] flex items-center justify-center">Úrovně</div>
          <div className="w-[78px] h-[22px] bg-[#f0f0f0] border-y border-r border-[#d9d9d9] flex items-center justify-center">Vizualizace</div>
        </div>
        <div className="mx-[8px] h-[184px] shrink-0 bg-white border border-t-0 border-[#d9d9d9] flex flex-col gap-[16px] pt-[21px]">
          <div className="flex items-center h-6">
            <div className="w-[293px] text-right relative top-px">Období:</div>
            <div className="ml-[10px] w-[80px] h-6 border border-[#7a7a7a] pl-[3px] leading-[20px]">10</div>
            <div className="w-[80px] text-right relative top-px">Posun:</div>
            <div className="ml-[10px] w-[80px] h-6 border border-[#0078d7] pl-[3px] leading-[20px] flex items-center">0<div className="w-px h-[17px] bg-black" /></div>
          </div>
          <div className="flex items-center h-6">
            <div className="w-[293px] text-right relative top-px">MA metoda:</div>
            <div className="ml-[10px] w-[250px] h-6 border border-[#adadad] bg-[#e1e1e1] pl-[3px] pt-[2px] flex items-center justify-between pr-[6px]">
              Simple
              <svg width="10" height="6" viewBox="0 0 10 6" fill="none"><path d="M.5.500L5 5 9.500.500" stroke="#555" /></svg>
            </div>
          </div>
          <div className="flex items-center h-6">
            <div className="w-[293px] text-right relative top-px">Použít na:</div>
            <div className="ml-[10px] w-[250px] h-6 border border-[#adadad] bg-[#e1e1e1] pl-[3px] pt-[2px] flex items-center justify-between pr-[6px]">
              Close
              <svg width="10" height="6" viewBox="0 0 10 6" fill="none"><path d="M.5.500L5 5 9.500.500" stroke="#555" /></svg>
            </div>
          </div>
          <div className="flex items-center h-6">
            <div className="w-[293px] text-right relative top-px">Odchylka:</div>
            <div className="ml-[10px] w-[80px] h-6 border border-[#7a7a7a] pl-[3px] leading-[20px]">1.00</div>
            <div className="ml-[10px] relative top-px">%</div>
          </div>
        </div>
        <div className="flex justify-end gap-[10px] pr-[9px] pt-[10px]">
          <div className="w-[98px] h-[26px] pt-[2px] bg-[#e1e1e1] border-2 border-[#0078d7] flex items-center justify-center">OK</div>
          <div className="w-[98px] h-[26px] pt-[2px] bg-[#e1e1e1] border border-[#adadad] flex items-center justify-center">Zrušit</div>
          <div className="w-[98px] h-[26px] pt-[2px] bg-[#e1e1e1] border border-[#adadad] flex items-center justify-center">Obnovit</div>
        </div>
      </div>
    </div>
  );
}
